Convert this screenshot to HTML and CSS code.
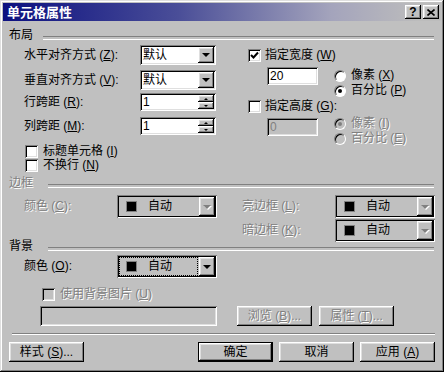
FILE: index.html
```html
<!DOCTYPE html>
<html>
	<head>
		<meta charset="utf-8">
		<link rel="stylesheet" href="styles.css">
	</head>
	<body>
		<div class="window">
			<div class="titlebar">
				<span class="title">单元格属性</span>
				<span class="tbtn">?</span>
				<span class="tbtn">
					<svg width="8" height="7" viewBox="0 0 8 7"><path d="M0.5 0.5L7.5 6.5M7.5 0.5L0.5 6.5" stroke="#000" stroke-width="1.6"/></svg>
				</span>
			</div>
			<div class="content">
				<!-- 布局 -->
				<div class="group-head head-layout"><span>布局</span></div>
				<div class="layout">
					<div class="col-left">
						<div class="field mt-3">
							<span class="lbl">水平对齐方式 (<u>Z</u>):</span>
							<div class="combo"><span class="val">默认</span><span class="drop"><i class="tri"></i></span></div>
						</div>
						<div class="field mt-5">
							<span class="lbl">垂直对齐方式 (<u>V</u>):</span>
							<div class="combo"><span class="val">默认</span><span class="drop"><i class="tri"></i></span></div>
						</div>
						<div class="field mt-3">
							<span class="lbl">行跨距 (<u>R</u>):</span>
							<div class="spin"><span class="val">1</span><span class="spin-btns"><span><i class="mini up"></i></span><span><i class="mini"></i></span></span></div>
						</div>
						<div class="field mt-6">
							<span class="lbl">列跨距 (<u>M</u>):</span>
							<div class="spin"><span class="val">1</span><span class="spin-btns"><span><i class="mini up"></i></span><span><i class="mini"></i></span></span></div>
						</div>
						<div class="check check-left mt-9"><span class="cb"></span><span>标题单元格 (<u>I</u>)</span></div>
						<div class="check check-left"><span class="cb"></span><span>不换行 (<u>N</u>)</span></div>
					</div>
					<div class="col-right">
						<div class="check mt-6">
							<span class="cb">
								<svg width="9" height="9" viewBox="0 0 9 9"><path d="M1 4L3.5 6.5L8 1.5" fill="none" stroke="#000" stroke-width="2"/></svg>
							</span>
							<span>指定宽度 (<u>W</u>)</span>
						</div>
						<div class="size-row mt-5">
							<div class="input">20</div>
							<div class="radios mt-1">
								<div class="radio-row"><span class="radio"></span><span>像素 (<u>X</u>)</span></div>
								<div class="radio-row"><span class="radio on"></span><span>百分比 (<u>P</u>)</span></div>
							</div>
						</div>
						<div class="check mt-1"><span class="cb"></span><span>指定高度 (<u>G</u>):</span></div>
						<div class="size-row mt-3">
							<div class="input disabled mt-2">0</div>
							<div class="radios">
								<div class="radio-row dis"><span class="radio on off"></span><span>像素 (<u>I</u>)</span></div>
								<div class="radio-row dis"><span class="radio off"></span><span>百分比 (<u>E</u>)</span></div>
							</div>
						</div>
					</div>
				</div>

				<!-- 边框 -->
				<div class="group-head head-wide dis mt-5"><span>边框</span></div>
				<div class="border-grid">
					<span class="lbl dis">颜色 (<u>C</u>):</span>
					<div class="ccombo">
						<span class="cc-body"><i class="sw"></i>自动</span>
						<span class="drop tall"><i class="tri grey"></i></span>
					</div>
					<span></span>
					<span class="lbl dis">亮边框 (<u>L</u>):</span>
					<div class="ccombo">
						<span class="cc-body"><i class="sw"></i>自动</span>
						<span class="drop tall"><i class="tri grey"></i></span>
					</div>
					<span class="lbl dis row2">暗边框 (<u>K</u>):</span>
					<div class="ccombo">
						<span class="cc-body"><i class="sw"></i>自动</span>
						<span class="drop tall"><i class="tri grey"></i></span>
					</div>
				</div>

				<!-- 背景 -->
				<div class="group-head head-wide head-bg"><span>背景</span></div>
				<div class="bg-row mt-2">
					<span class="lbl">颜色 (<u>O</u>):</span>
					<div class="ccombo">
						<span class="cc-body focus"><i class="sw"></i>自动</span>
						<span class="drop tall"><i class="tri"></i></span>
					</div>
				</div>
				<div class="check check-img dis mt-9"><span class="cb off"></span><span>使用背景图片 (<u>U</u>)</span></div>
				<div class="img-row mt-5">
					<div class="input disabled path"></div>
					<span class="btn dis browse">浏览 (<u>B</u>)...</span>
					<span class="btn dis">属性 (<u>T</u>)...</span>
				</div>

				<div class="sep"></div>
				<div class="actions">
					<span class="btn">样式 (<u>S</u>)...</span>
					<span class="btn default">确定</span>
					<span class="btn">取消</span>
					<span class="btn">应用 (<u>A</u>)</span>
				</div>
			</div>
		</div>
	</body>
</html>
```

FILE: styles.css
```css
*{
	margin: 0;
	padding: 0;
	box-sizing: border-box;
}
html,body{
	width: 444px;
	height: 372px;
	overflow: hidden;
}
body{
	font-family: "Liberation Sans", "Noto Sans CJK SC", sans-serif;
	font-size: 12px;
	line-height: 13px;
	color: #000;
	background: #c0c0c0;
}
u{
	text-underline-offset: 1px;
}
.window{
	width: 444px;
	height: 372px;
	padding: 3px;
	background: #c0c0c0;
	box-shadow: inset -1px -1px #000, inset 1px 1px #dfdfdf, inset -2px -2px #808080, inset 2px 2px #fff;
}
.titlebar{
	height: 18px;
	display: flex;
	align-items: center;
	padding: 0 2px;
	background: linear-gradient(90deg, #0c1080 0%, #4a4e98 40%, #a4a4bc 75%, #bcbcbc 95%);
}
.title{
	flex: 1;
	color: #fff;
	font-weight: bold;
	font-size: 13px;
	padding-left: 2px;
}
.tbtn{
	width: 16px;
	height: 14px;
	margin-left: 2px;
	display: flex;
	align-items: center;
	justify-content: center;
	background: #c0c0c0;
	font-weight: bold;
	font-size: 12px;
	box-shadow: inset -1px -1px #000, inset 1px 1px #fff, inset -2px -2px #808080, inset 2px 2px #dfdfdf;
}
.content{
	padding: 0 6px;
}

/* spacing helpers */
.mt-1{ margin-top: 1px; }
.mt-2{ margin-top: 2px; }
.mt-3{ margin-top: 3px; }
.mt-4{ margin-top: 4px; }
.mt-5{ margin-top: 5px; }
.mt-6{ margin-top: 6px; }
.mt-9{ margin-top: 9px; }

.dis{
	color: #808080;
	text-shadow: 1px 1px #fff;
}

/* group headings */
.group-head{
	display: flex;
	height: 13px;
}
.group-head::after{
	content: "";
	flex: 1;
	height: 2px;
	margin: 7px 1px 0 10px;
	border-top: 1px solid #808080;
	border-bottom: 1px solid #fff;
}
.head-layout{
	margin-top: 8px;
}
.head-wide::after{
	margin-left: 15px;
}
.head-bg{
	margin-top: -2px;
}

/* layout section */
.layout{
	display: flex;
	padding-left: 15px;
}
.col-left{
	width: 192px;
}
.col-right{
	margin-left: 32px;
}
.field{
	display: flex;
	align-items: center;
}
.field .lbl{
	width: 116px;
}
.check{
	display: flex;
	align-items: center;
	gap: 4px;
	height: 14px;
}
.check-left{
	margin-left: 1px;
	gap: 5px;
}
.check-img{
	margin-left: 33px;
	gap: 5px;
}

/* controls */
.combo, .spin, .input, .cb{
	background: #fff;
	box-shadow: inset 1px 1px #808080, inset -1px -1px #fff, inset 2px 2px #000, inset -2px -2px #dfdfdf;
}
.combo{
	width: 76px;
	height: 20px;
	padding: 2px;
	display: flex;
	align-items: center;
}
.combo .val, .spin .val{
	flex: 1;
	padding-left: 1px;
}
.drop, .spin-btns span, .btn{
	background: #c0c0c0;
	box-shadow: inset -1px -1px #000, inset 1px 1px #fff, inset -2px -2px #808080, inset 2px 2px #dfdfdf;
}
.drop{
	width: 16px;
	height: 16px;
	display: flex;
	align-items: center;
	justify-content: center;
}
.drop.tall{
	height: 19px;
	margin-left: auto;
}
.tri{
	width: 0;
	height: 0;
	border-left: 4px solid transparent;
	border-right: 4px solid transparent;
	border-top: 4px solid #000;
}
.tri.grey{
	border-top-color: #808080;
	filter: drop-shadow(1px 1px 0 #fff);
}
.spin{
	width: 76px;
	height: 18px;
	padding: 2px;
	display: flex;
	align-items: center;
}
.spin-btns{
	width: 16px;
	height: 14px;
	display: flex;
	flex-direction: column;
}
.spin-btns span{
	height: 7px;
	display: flex;
	align-items: center;
	justify-content: center;
}
.mini{
	width: 0;
	height: 0;
	border-left: 2px solid transparent;
	border-right: 2px solid transparent;
	border-top: 2px solid #000;
}
.mini.up{
	border-top: 0;
	border-bottom: 2px solid #000;
}
.cb{
	width: 13px;
	height: 13px;
	flex: none;
	display: flex;
	align-items: center;
	justify-content: center;
}
.cb.off{
	background: #c0c0c0;
}
.input{
	width: 51px;
	height: 18px;
	margin-left: 19px;
	padding: 2px 3px;
	display: flex;
	align-items: center;
}
.input.disabled{
	background: #c0c0c0;
	color: #808080;
}
.size-row{
	display: flex;
	align-items: flex-start;
}
.radios{
	margin-left: 16px;
}
.radio-row{
	height: 15px;
	display: flex;
	align-items: center;
	gap: 5px;
}
.radio{
	width: 12px;
	height: 12px;
	flex: none;
	border-radius: 50%;
	background: #fff;
	border: 1px solid;
	border-color: #808080 #fff #fff #808080;
	box-shadow: inset 1px 1px #000;
	display: flex;
	align-items: center;
	justify-content: center;
}
.radio.on::after{
	content: "";
	width: 4px;
	height: 4px;
	border-radius: 50%;
	background: #000;
}
.radio.off{
	background: #c0c0c0;
}
.radio.off::after{
	background: #808080;
}

/* colour combos */
.ccombo{
	width: 100px;
	height: 23px;
	padding: 2px;
	display: flex;
	align-items: center;
	background: #c0c0c0;
	box-shadow: inset 1px 1px #808080, inset -1px -1px #fff, inset 2px 2px #000, inset -2px -2px #000;
	color: #000;
	text-shadow: none;
}
.cc-body{
	flex: 1;
	height: 19px;
	display: flex;
	align-items: center;
}
.cc-body.focus{
	outline: 1px dotted #000;
	outline-offset: -1px;
	margin-right: 1px;
}
.sw{
	width: 11px;
	height: 11px;
	margin: 0 11px 0 7px;
	background: #000;
	border: 1px solid #808080;
}
.border-grid{
	display: grid;
	grid-template-columns: 93px 100px 25px 93px 100px;
	grid-template-rows: 23px 23px;
	row-gap: 1px;
	align-items: center;
	padding-left: 15px;
	margin-top: 5px;
}
.border-grid .row2{
	grid-column: 4;
}
.bg-row{
	display: flex;
	align-items: center;
	padding-left: 15px;
}
.bg-row .lbl{
	width: 93px;
}
.img-row{
	display: flex;
	align-items: center;
}
.input.path{
	width: 177px;
	height: 20px;
	margin-left: 31px;
}
.btn{
	width: 75px;
	height: 20px;
	display: flex;
	align-items: center;
	justify-content: center;
}
.browse{
	margin-left: 20px;
	margin-right: 7px;
}
.sep{
	height: 2px;
	margin: 7px 0 0 3px;
	border-top: 1px solid #808080;
	border-bottom: 1px solid #fff;
}
.actions{
	display: flex;
	gap: 6px;
	margin-top: 7px;
}
.actions .default{
	margin-left: auto;
	border: 1px solid #000;
}
```
